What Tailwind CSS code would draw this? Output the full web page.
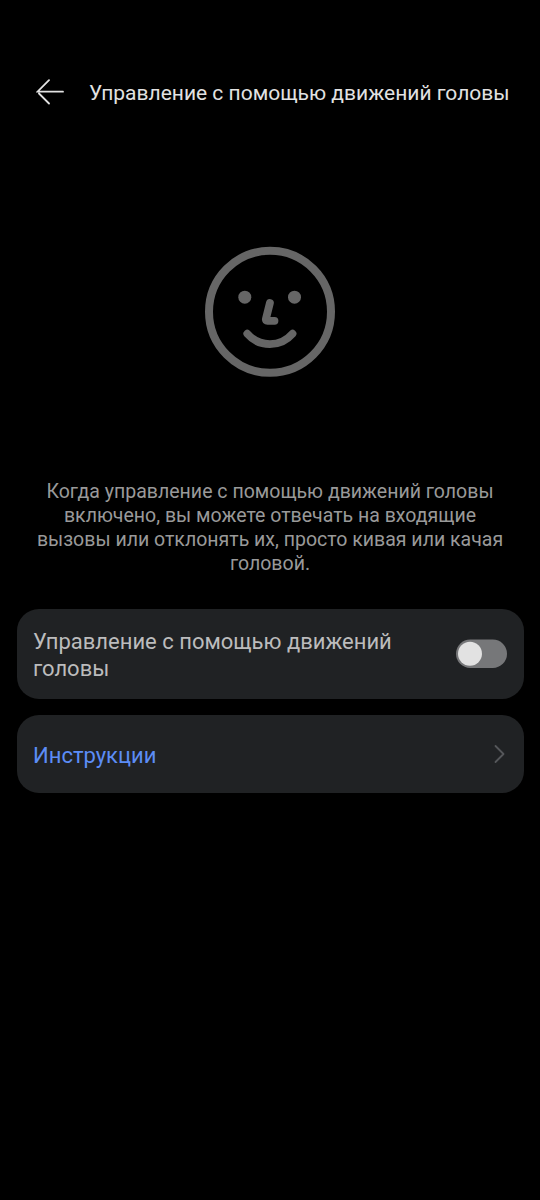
<!DOCTYPE html>
<html lang="ru"><head><meta charset="utf-8"><title>Управление с помощью движений головы</title>
<script src="https://cdn.jsdelivr.net/npm/@tailwindcss/browser@4"></script></head>
<body class="bg-black font-['Roboto',sans-serif] w-[540px] h-[1200px] overflow-hidden flex flex-col">
<header class="mt-[72px] h-10 flex items-center pl-9">
<svg class="w-7 h-7 shrink-0" viewBox="0 0 28 28" fill="none" stroke="#e2e2e2" stroke-width="1.8" stroke-linecap="round"><path d="M27 13.700H1.500L13 2.200M3 15.500L13 25.500"/></svg>
<h1 class="ml-[25px] pt-0.5 text-[21px] leading-6 text-[#e2e2e2] whitespace-nowrap">Управление с помощью движений головы</h1>
</header>
<main class="flex flex-col">
<svg class="mt-[134px] mx-auto w-[132px] h-[132px]" viewBox="0 0 132 132" fill="none" stroke="#666" stroke-width="8" stroke-linecap="round" stroke-linejoin="round"><circle cx="66" cy="65.800" r="61"/><circle cx="40.800" cy="51.200" r="6.500" fill="#666" stroke="none"/><circle cx="90.500" cy="51.200" r="6.500" fill="#666" stroke="none"/><path stroke-width="7.800" d="M65.900 57L61.900 73Q61.500 74.800 63.500 74.800H70.500M43.300 87.700A29.800 29.800 0 0 0 88.500 87.700"/></svg>
<p class="mt-[102px] text-[19.53px] leading-6 text-[#999] text-center whitespace-nowrap">Когда управление с помощью движений головы<br>включено, вы можете отвечать на входящие<br>вызовы или отклонять их, просто кивая или качая<br>головой.</p>
<section class="mt-[33px] mx-[16.500px] h-[89.500px] rounded-[22px] bg-[#202224] flex items-center justify-between pl-[16.500px] pr-[16.500px]">
<span class="pt-[2px] text-[22px] leading-[27px] text-[#bcbcbd]">Управление с помощью движений<br>головы</span>
<svg class="w-[52px] h-[30px]" viewBox="0 0 52 30"><rect x="1" y="0.500" width="51" height="28.400" rx="14.200" fill="#767779"/><circle cx="15" cy="14.700" r="12" fill="#e2e2e2"/></svg>
</section>
<section class="mt-[16.500px] mx-[16.500px] h-[77.500px] rounded-[22px] bg-[#202224] flex items-center justify-between pl-[16.500px] pr-[18px]">
<span class="pt-[3px] text-[22px] leading-[27px] text-[#5c8df6]">Инструкции</span>
<svg class="w-3 h-5" viewBox="0 0 12 20" fill="none" stroke="#55575a" stroke-width="1.800" stroke-linecap="round" stroke-linejoin="round"><path d="M1.500 2L9.500 10L1.500 18"/></svg>
</section>
</main></body></html>
